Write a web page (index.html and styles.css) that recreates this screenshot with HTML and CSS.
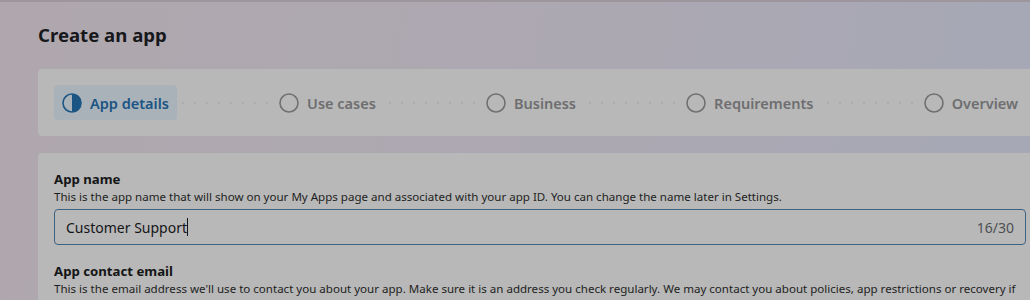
FILE: index.html
```html
<!DOCTYPE html>
<html lang="en">
<head>
<meta charset="utf-8">
<title>Create an app</title>
<link rel="stylesheet" href="styles.css">
</head>
<body>
<div class="page">
  <h1 class="title">Create an app</h1>
  <div class="card stepper">
    <div class="step active">
      <svg class="ico" width="20" height="20" viewBox="0 0 20 20"><circle cx="10" cy="10" r="9" fill="none" stroke="currentColor" stroke-width="1.6"/><path d="M10 1 A9 9 0 0 1 10 19 Z" fill="currentColor"/></svg>
      <span>App details</span>
    </div>
    <div class="conn"></div>
    <div class="step">
      <svg class="ico" width="20" height="20" viewBox="0 0 20 20"><circle cx="10" cy="10" r="9" fill="none" stroke="currentColor" stroke-width="1.6"/></svg>
      <span>Use cases</span>
    </div>
    <div class="conn"></div>
    <div class="step">
      <svg class="ico" width="20" height="20" viewBox="0 0 20 20"><circle cx="10" cy="10" r="9" fill="none" stroke="currentColor" stroke-width="1.6"/></svg>
      <span>Business</span>
    </div>
    <div class="conn"></div>
    <div class="step">
      <svg class="ico" width="20" height="20" viewBox="0 0 20 20"><circle cx="10" cy="10" r="9" fill="none" stroke="currentColor" stroke-width="1.6"/></svg>
      <span>Requirements</span>
    </div>
    <div class="conn"></div>
    <div class="step">
      <svg class="ico" width="20" height="20" viewBox="0 0 20 20"><circle cx="10" cy="10" r="9" fill="none" stroke="currentColor" stroke-width="1.6"/></svg>
      <span>Overview</span>
    </div>
  </div>
  <div class="card form">
    <div class="field">
      <div class="label">App name</div>
      <div class="desc">This is the app name that will show on your My Apps page and associated with your app ID. You can change the name later in Settings.</div>
      <div class="input">
        <span class="value">Customer Support<span class="caret"></span></span>
        <span class="count">16/30</span>
      </div>
    </div>
    <div class="field">
      <div class="label">App contact email</div>
      <div class="desc">This is the email address we'll use to contact you about your app. Make sure it is an address you check regularly. We may contact you about policies, app restrictions or recovery if your app is deleted or compromised.</div>
    </div>
  </div>
</div>
</body>
</html>
```
FILE: styles.css
```css
html, body {
  margin: 0;
  padding: 0;
  height: 100%;
  overflow: hidden;
}
body {
  font-family: "Noto Sans", "Liberation Sans", sans-serif;
  background: linear-gradient(100deg, #afa7ad 0%, #ada8b1 45%, #a6a8b6 100%);
  color: #141516;
}
.page {
  width: 1004px;
  padding: 0 0 0 38px;
  border-top: 2px solid #9d979d;
}
.title {
  margin: 0;
  padding: 19px 0 0;
  box-sizing: border-box;
  height: 67px;
  font-size: 18.6px;
  font-weight: 700;
  line-height: 28px;
  color: #17181b;
}
.card {
  background: #b8b8b8;
  border-radius: 4px;
  box-sizing: border-box;
}
.stepper {
  display: flex;
  align-items: center;
  padding: 16px;
  height: 67px;
}
.step {
  display: flex;
  align-items: center;
  gap: 8px;
  height: 35px;
  padding: 0 8px;
  border-radius: 4px;
  font-size: 14.5px;
  font-weight: 600;
  color: #6e6e70;
  white-space: nowrap;
}
.step .ico { flex: none; color: #707072; }
.step.active {
  background: #a9b1b9;
  color: #1a5584;
}
.step.active .ico { color: #1a5584; }
.conn {
  flex: 1;
  height: 2px;
  background-image: radial-gradient(circle, #acacac 0.9px, transparent 1.2px);
  background-size: 12px 2px;
  background-repeat: repeat-x;
}
.form {
  margin-top: 17px;
  padding: 16px 16px 0;
  height: 200px;
}
.field { margin-bottom: 16px; }
.label {
  font-size: 13.2px;
  font-weight: 700;
  line-height: 20px;
  color: #141516;
}
.desc {
  font-size: 11.55px;
  line-height: 16px;
  color: #1e1f22;
}
.input {
  margin-top: 4px;
  height: 36px;
  box-sizing: border-box;
  border: 1px solid #3d6183;
  border-radius: 4px;
  display: flex;
  align-items: center;
  justify-content: space-between;
  padding: 0 11px;
  font-size: 14px;
}
.value { color: #141516; display: flex; align-items: center; }
.caret {
  display: inline-block;
  width: 1px;
  height: 18px;
  background: #141516;
}
.count { color: #4e4f52; }
```
